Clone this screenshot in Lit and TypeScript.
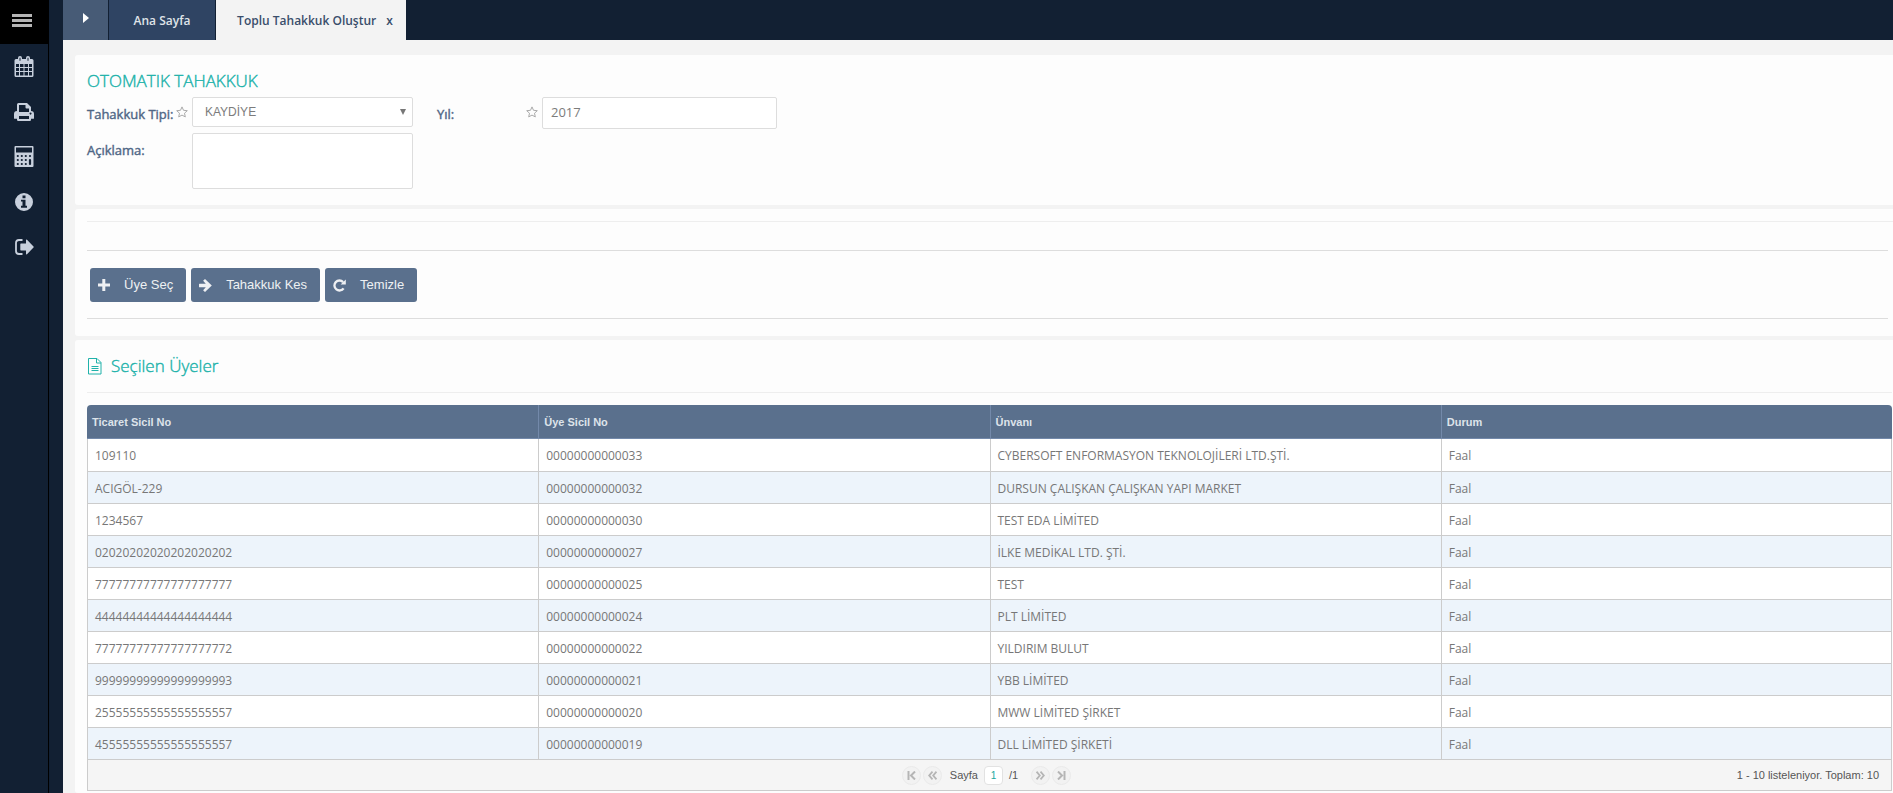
import { LitElement, html, css, svg } from "lit";
import { customElement, state } from "lit/decorators.js";

interface Member {
  trade: string;
  member: string;
  title: string;
  status: string;
}

const MEMBERS: Member[] = [
  { trade: "109110", member: "00000000000033", title: "CYBERSOFT ENFORMASYON TEKNOLOJİLERİ LTD.ŞTİ.", status: "Faal" },
  { trade: "ACIGÖL-229", member: "00000000000032", title: "DURSUN ÇALIŞKAN ÇALIŞKAN YAPI MARKET", status: "Faal" },
  { trade: "1234567", member: "00000000000030", title: "TEST EDA LİMİTED", status: "Faal" },
  { trade: "02020202020202020202", member: "00000000000027", title: "İLKE MEDİKAL LTD. ŞTİ.", status: "Faal" },
  { trade: "77777777777777777777", member: "00000000000025", title: "TEST", status: "Faal" },
  { trade: "44444444444444444444", member: "00000000000024", title: "PLT LİMİTED", status: "Faal" },
  { trade: "77777777777777777772", member: "00000000000022", title: "YILDIRIM BULUT", status: "Faal" },
  { trade: "99999999999999999993", member: "00000000000021", title: "YBB LİMİTED", status: "Faal" },
  { trade: "25555555555555555557", member: "00000000000020", title: "MWW LİMİTED ŞİRKET", status: "Faal" },
  { trade: "45555555555555555557", member: "00000000000019", title: "DLL LİMİTED ŞİRKETİ", status: "Faal" },
];

const icon = (w: number, h: number, body: unknown) =>
  html`<svg width=${w} height=${h} viewBox="0 0 ${w} ${h}" fill="currentColor" aria-hidden="true">${body}</svg>`;

const calendar = icon(20, 21, svg`<path fill-rule="evenodd" d="M2 3h2V2a2 2 0 0 1 4 0v1h4V2a2 2 0 0 1 4 0v1h2a1.500 1.500 0 0 1 1.500 1.500V19.500A1.500 1.500 0 0 1 18 21H2A1.500 1.500 0 0 1 .5 19.500V4.500A1.500 1.500 0 0 1 2 3zM2 8v3h3V8zm4 0v3h3.500V8zm4.500 0v3H14V8zM15 8v3h3V8zM2 12v3h3v-3zm4 0v3h3.500v-3zm4.500 0v3H14v-3zm4.500 0v3h3v-3zM2 16v3.500h3V16zm4 0v3.500h3.500V16zm4.500 0v3.500H14V16zm4.500 0v3.500h3V16zM5.500 1.800v3h1v-3zm8 0v3h1v-3z"/>`);
const printer = icon(20, 18, svg`<path fill-rule="evenodd" d="M3 8V1.500A1.500 1.500 0 0 1 4.500 0H13l4 4v4a3 3 0 0 1 3 3v4.200a.6.6 0 0 1-.6.600H17v1a1.200 1.200 0 0 1-1.200 1.200H4.200A1.200 1.200 0 0 1 3 16.800v-1H.6a.6.6 0 0 1-.6-.6V11a3 3 0 0 1 3-3zm2-6v7h10V5.500h-2.500A1 1 0 0 1 11.500 4.500V2zm0 11v3h10v-3zm11.500-3.500a1 1 0 1 0 .1 0z"/>`);
const calculator = icon(20, 21, svg`<path fill-rule="evenodd" d="M1.500 0h17A1 1 0 0 1 19.500 1v19a1 1 0 0 1-1 1h-17a1 1 0 0 1-1-1V1a1 1 0 0 1 1-1zM2 1.500v5h16v-5z"/><path stroke="#122033" stroke-width="2.200" stroke-linecap="round" d="M3.800 10h.01M7.800 10h.01M11.800 10h.01M16 10h.01M3.800 14h.01M7.800 14h.01M11.800 14h.01M16 14v4M3.800 18h.01M7.800 18h.01M11.800 18h.01"/>`);
const info = icon(18, 18, svg`<path fill-rule="evenodd" d="M9 0a9 9 0 1 1 0 18A9 9 0 0 1 9 0zM7.500 2.500v2.700h3V2.500zM6 6.800v1.700h1.500v4.300H6v2h6v-2h-1.500v-6z"/>`);
const signOut = icon(19, 16, svg`<path d="M7.500 1H4a3 3 0 0 0-3 3v8a3 3 0 0 0 3 3h3.500" fill="none" stroke="currentColor" stroke-width="1.800"/><path d="M6 4.500h5V1.200c0-.7.600-.9 1-.5l6.500 6.700a.8.8 0 0 1 0 1.100L12 15.200c-.4.400-1 .2-1-.5V11.500H6a.7.7 0 0 1-.7-.7V5.200A.7.7 0 0 1 6 4.500z"/>`);
const star = icon(12, 12, svg`<path fill="none" stroke="currentColor" stroke-linejoin="round" d="M6 .9l1.500 3.400 3.800.4-2.800 2.500.8 3.700L6 9.100l-3.300 1.800.8-3.700L.7 4.700l3.800-.4z"/>`);
const plus = icon(12, 12, svg`<path d="M4.300 0h3v4.500H12v3H7.300V12h-3V7.500H0v-3h4.300z"/>`);
const arrow = icon(13, 13, svg`<path d="M6 0l6.800 6.500L6 13 4.100 11.200l2.700-2.900H.5A.5.500 0 0 1 0 7.800V5.200a.5.500 0 0 1 .5-.5h6.300L4.100 1.800z"/>`);
const redo = icon(13, 13, svg`<path fill="none" stroke="currentColor" stroke-width="2.300" d="M10.600 9.300a5 5 0 1 1-.5-6.200"/><path d="M12.800.4v5H7.600z"/>`);
const fileText = icon(15, 17, svg`<path fill="none" stroke="currentColor" d="M1.500 .5h8.500l4 4v11.500H1.500V.5M9.500.5v4.500h4.500M4.500 8.500h7M4.500 10.500h7M4.500 12.500h7"/>`);
const first = icon(9, 9, svg`<path fill="none" stroke="currentColor" stroke-width="2" d="M1.500 0v9M8 .5l-4 4 4 4"/>`);
const prev = icon(9, 9, svg`<path fill="none" stroke="currentColor" stroke-width="1.800" d="M4.500.7L1.200 4.500l3.300 3.800M8.500.7L5.200 4.500l3.300 3.800"/>`);
const next = icon(9, 9, svg`<path fill="none" stroke="currentColor" stroke-width="1.800" d="M.5.7l3.300 3.800L.5 8.300M4.500.7l3.300 3.800-3.300 3.800"/>`);
const last = icon(9, 9, svg`<path fill="none" stroke="currentColor" stroke-width="2" d="M7.500 0v9M1 .5l4 4-4 4"/>`);

@customElement("app-root")
export class AppRoot extends LitElement {
  static styles = css`
    :host {
      display: flex;
      min-height: 100vh;
      background: #f3f3f3;
      font-family: "Open Sans", "Noto Sans", sans-serif;
      font-size: 13px;
      color: #4f6685;
    }
    * { box-sizing: border-box; }
    button, input, select, textarea { font: inherit; margin: 0; }
    button { cursor: pointer; border: 0; padding: 0; }
    svg { display: block; flex: none; }

    .side {
      flex: none;
      width: 49px;
      background: #122033;
      border-right: 1px solid #000;
    }
    .menu {
      display: flex;
      align-items: center;
      width: 48px;
      height: 44px;
      padding: 0 0 4px 12px;
      background: #000;
      color: #b5b5b5;
    }
    .links {
      display: flex;
      flex-direction: column;
      margin: 0;
      padding: 0;
      list-style: none;
    }
    .links a {
      display: flex;
      align-items: center;
      justify-content: center;
      height: 45px;
      color: #c8d0dd;
    }
    .gutter { flex: none; width: 14px; background: #122033; }

    .work { flex: 1; min-width: 0; display: flex; flex-direction: column; }
    .tabs { display: flex; gap: 1px; height: 40px; background: #122033; }
    .tab {
      display: flex;
      align-items: center;
      justify-content: center;
      gap: 10px;
      font-size: 12px;
      font-weight: 600;
      color: #dfe3e8;
      background: #2f4463;
      width: 106px;
    }
    .toggle { width: 45px; background: #475b76; color: #fff; padding-bottom: 4px; }
    .current { width: 190px; padding-left: 8px; background: #f3f3f3; color: #3a4e6b; }
    .close { background: none; color: inherit; }

    .panels { flex: 1; display: flex; flex-direction: column; gap: 4px; padding: 15px 0 0 12px; }
    .panel { background: #fdfdfd; border-radius: 3px 0 0 3px; padding-left: 12px; }
    h1, h2 {
      margin: 0;
      font-size: 17px;
      font-weight: 300;
      line-height: 24px;
      color: #20b2aa;
      -webkit-text-stroke: 0.4px currentColor;
    }
    h2 svg { -webkit-text-stroke: 0; }

    .form { padding-top: 14px; height: 150px; }
    .fields {
      display: grid;
      grid-template-columns: 89px 16px 221px 24px 89px 16px 235px;
      row-gap: 4px;
      padding-top: 4px;
    }
    .fields label {
      padding-top: 8px;
      line-height: 18px;
      white-space: nowrap;
      -webkit-text-stroke: 0.4px currentColor;
    }
    .star { color: #aaa; padding-top: 9px; }
    .box {
      width: 100%;
      border: 1px solid #ddd;
      border-radius: 2px;
      background: #fff;
      color: #7c7c7c;
      outline: none;
    }
    .pick { position: relative; }
    select.box { appearance: none; height: 30px; padding: 0 12px; font-family: "Liberation Sans", Arial, sans-serif; font-size: 12px; }
    .caret {
      position: absolute;
      right: 7px;
      top: 12px;
      border: 3px solid transparent;
      border-top: 6px solid #777;
      border-bottom: 0;
      pointer-events: none;
    }
    input.box { height: 32px; padding: 0 8px 2px; }
    textarea.box { display: block; height: 56px; resize: none; }

    .actions { height: 127px; padding-top: 12px; }
    hr { margin: 0; border: 0; border-top: 1px solid #eee; }
    .tools { margin: 28px 5px 0 0; border: 1px solid #ddd; border-width: 1px 0; }
    .bar { display: flex; gap: 5px; padding: 17px 3px 16px; }
    .btn {
      display: flex;
      align-items: center;
      gap: 14px;
      height: 34px;
      padding: 0 13px 0 8px;
      border-radius: 3px;
      background: #5a708d;
      color: #eef0f3;
      font-family: "Liberation Sans", Arial, sans-serif;
    }
    .btn span { padding-bottom: 2px; }

    .list { flex: 1; padding-top: 14px; padding-right: 1px; }
    h2 { display: flex; align-items: center; gap: 9px; padding-bottom: 14px; }
    .grid { margin-top: 12px; }
    table { width: 100%; table-layout: fixed; border-collapse: separate; border-spacing: 0; }
    th {
      height: 34px;
      padding: 0 5px;
      text-align: left;
      font: bold 11px "Liberation Sans", Arial, sans-serif;
      color: #dde3ea;
      background: #5a708d;
      border-left: 1px solid #7389aa;
      border-bottom: 1px solid #7389aa;
    }
    th:first-child { border-top-left-radius: 4px; border-left: 0; }
    th:last-child { border-top-right-radius: 4px; }
    td {
      height: 32px;
      padding: 2px 7px 0;
      font-size: 12px;
      color: #777;
      background: #fff;
      border-left: 1px solid #ccc;
      border-bottom: 1px solid #ccc;
    }
    td:last-child { border-right: 1px solid #ccc; }
    tbody tr:first-child td { height: 33px; padding-top: 0; }
    tr:nth-child(even) td { background: #edf4fb; }
    .pager {
      display: grid;
      grid-template-columns: 1fr auto 1fr;
      align-items: center;
      height: 31px;
      border: 1px solid #ccc;
      border-top: 0;
      background: #f5f5f5;
      color: #555;
      font: 11px "Liberation Sans", Arial, sans-serif;
    }
    .pages { grid-column: 2; display: flex; align-items: center; gap: 2px; padding-right: 6px; }
    .nav {
      display: flex;
      align-items: center;
      justify-content: center;
      width: 19px;
      height: 19px;
      border: 1px solid #eaeaea;
      border-radius: 10px;
      background: #f2f2f2;
      color: #b5b5b5;
    }
    .pages label { padding: 0 4px 0 6px; }
    .pages input {
      width: 19px;
      height: 19px;
      padding: 0;
      text-align: center;
      border: 1px solid #e2e2e2;
      border-radius: 4px;
      background: #fff;
      color: #20a8a0;
      font-size: 10px;
    }
    .total { padding: 0 11px 0 4px; }
    .count { text-align: right; padding-right: 12px; }
  `;

  @state() private year = "2017";

  render() {
    return html`
      <nav class="side">
        <button class="menu" aria-label="Menü">
          ${icon(20, 13, svg`<path d="M0 0h20v3H0zM0 5h20v3H0zM0 10h20v3H0z"/>`)}
        </button>
        <ul class="links">
          <li><a href="#" aria-label="Takvim">${calendar}</a></li>
          <li><a href="#" aria-label="Yazdır">${printer}</a></li>
          <li><a href="#" aria-label="Hesap">${calculator}</a></li>
          <li><a href="#" aria-label="Bilgi">${info}</a></li>
          <li><a href="#" aria-label="Çıkış">${signOut}</a></li>
        </ul>
      </nav>
      <div class="gutter"></div>
      <div class="work">
        <header class="tabs">
          <button class="tab toggle" aria-label="Aç">${icon(6, 10, svg`<path d="M0 0l6 5-6 5z"/>`)}</button>
          <button class="tab">Ana Sayfa</button>
          <div class="tab current"><span>Toplu Tahakkuk Oluştur</span><button class="close">x</button></div>
        </header>
        <main class="panels">
          <section class="panel form">
            <h1>OTOMATIK TAHAKKUK</h1>
            <div class="fields">
              <label for="type">Tahakkuk Tipi:</label>
              <span class="star">${star}</span>
              <div class="pick">
                <select class="box" id="type"><option>KAYDİYE</option></select>
                <span class="caret"></span>
              </div>
              <span></span>
              <label for="year">Yıl:</label>
              <span class="star">${star}</span>
              <input class="box" id="year" .value=${this.year}
                @input=${(e: Event) => (this.year = (e.target as HTMLInputElement).value)}>
              <label for="note">Açıklama:</label>
              <span></span>
              <textarea class="box" id="note"></textarea>
            </div>
          </section>
          <section class="panel actions">
            <hr>
            <div class="tools">
              <div class="bar">
                <button class="btn">${plus}<span>Üye Seç</span></button>
                <button class="btn">${arrow}<span>Tahakkuk Kes</span></button>
                <button class="btn">${redo}<span>Temizle</span></button>
              </div>
            </div>
          </section>
          <section class="panel list">
            <h2>${fileText}<span>Seçilen Üyeler</span></h2>
            <hr>
            <div class="grid">
              <table>
                <thead>
                  <tr><th>Ticaret Sicil No</th><th>Üye Sicil No</th><th>Ünvanı</th><th>Durum</th></tr>
                </thead>
                <tbody>
                  ${MEMBERS.map((m) => html`<tr><td>${m.trade}</td><td>${m.member}</td><td>${m.title}</td><td>${m.status}</td></tr>`)}
                </tbody>
              </table>
              <div class="pager">
                <div class="pages">
                  <button class="nav" aria-label="İlk">${first}</button>
                  <button class="nav" aria-label="Önceki">${prev}</button>
                  <label for="page">Sayfa</label>
                  <input id="page" value="1">
                  <span class="total">/1</span>
                  <button class="nav" aria-label="Sonraki">${next}</button>
                  <button class="nav" aria-label="Son">${last}</button>
                </div>
                <span class="count">1 - 10 listeleniyor. Toplam: 10</span>
              </div>
            </div>
          </section>
        </main>
      </div>
    `;
  }
}
